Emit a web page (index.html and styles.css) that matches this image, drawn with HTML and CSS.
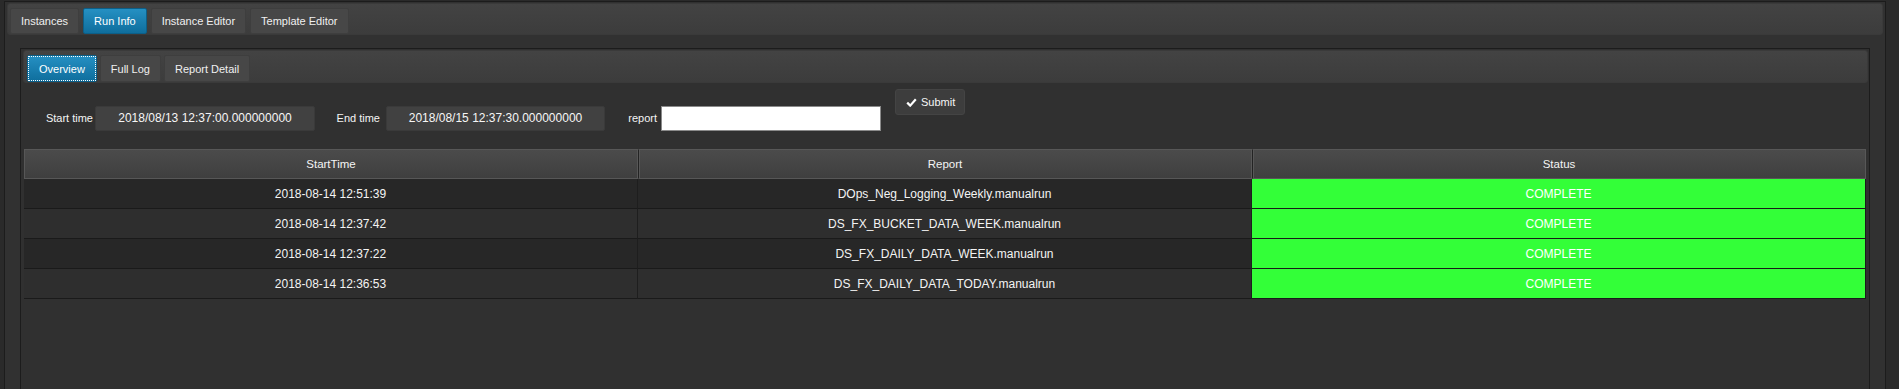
FILE: index.html
```html
<!DOCTYPE html>
<html>
<head>
<meta charset="utf-8">
<link rel="stylesheet" href="styles.css">
</head>
<body>
<div class="outer">
  <div class="tabbar outer-tabs">
    <div class="tab">Instances</div>
    <div class="tab active">Run Info</div>
    <div class="tab">Instance Editor</div>
    <div class="tab">Template Editor</div>
  </div>
  <div class="inner">
    <div class="tabbar inner-tabs">
      <div class="tab active focus"><span>Overview</span></div>
      <div class="tab">Full Log</div>
      <div class="tab">Report Detail</div>
    </div>
    <div class="form">
      <div class="lbl lbl1">Start time</div>
      <div class="field f1">2018/08/13 12:37:00.000000000</div>
      <div class="lbl lbl2">End time</div>
      <div class="field f2">2018/08/15 12:37:30.000000000</div>
      <div class="lbl lbl3">report</div>
      <div class="textbox"></div>
      <div class="btn">
        <svg class="check" width="11" height="9" viewBox="0 0 11 9"><path d="M1.2 4.6 L4.2 7.6 L9.8 1.2" fill="none" stroke="#fff" stroke-width="2.2" stroke-linejoin="miter"/></svg>
        <span>Submit</span>
      </div>
    </div>
    <table class="grid">
      <thead>
        <tr><th>StartTime</th><th>Report</th><th>Status</th></tr>
      </thead>
      <tbody>
        <tr class="odd"><td>2018-08-14 12:51:39</td><td>DOps_Neg_Logging_Weekly.manualrun</td><td class="ok">COMPLETE</td></tr>
        <tr class="even"><td>2018-08-14 12:37:42</td><td>DS_FX_BUCKET_DATA_WEEK.manualrun</td><td class="ok">COMPLETE</td></tr>
        <tr class="odd"><td>2018-08-14 12:37:22</td><td>DS_FX_DAILY_DATA_WEEK.manualrun</td><td class="ok">COMPLETE</td></tr>
        <tr class="even"><td>2018-08-14 12:36:53</td><td>DS_FX_DAILY_DATA_TODAY.manualrun</td><td class="ok">COMPLETE</td></tr>
      </tbody>
    </table>
  </div>
</div>
</body>
</html>
```

FILE: styles.css
```css
html, body {
  margin: 0;
  padding: 0;
  height: 389px;
  overflow: hidden;
}
body {
  background: #2a2a2a;
  font-family: "Liberation Sans", Arial, sans-serif;
  color: #f4f4f4;
  font-size: 11px;
}
.outer {
  margin: 1px 13px 0 4px;
  border: 1px solid #1c1c1c;
  border-bottom: none;
  background: #313131;
  padding: 1px 2px 0 2px;
  height: 386px;
}
.tabbar {
  display: flex;
  align-items: flex-start;
  gap: 4px;
  box-sizing: border-box;
  background: linear-gradient(#434343, #3c3c3c);
  border: 1px solid #3a3a3a;
  border-radius: 3px;
}
.outer-tabs {
  height: 32px;
  padding: 4px 0 0 2px;
}
.tab {
  box-sizing: border-box;
  height: 26px;
  padding: 0 10px;
  display: flex;
  align-items: center;
  background: #474747;
  border: 1px solid #3e3e3e;
  border-radius: 2px;
  color: #f0f0f0;
  white-space: nowrap;
}
.tab.active {
  background: linear-gradient(#2590c3, #0f6e9d);
  border-color: #0c5f88;
  color: #fff;
}
.inner {
  margin: 13px 13px 0 13px;
  border: 1px solid #1c1c1c;
  border-bottom: none;
  background: #303030;
  height: 339px;
  padding: 1px 1px 0 2px;
}
.inner-tabs {
  height: 33px;
  padding: 4px 0 0 3px;
  gap: 3px;
}
.inner-tabs .tab {
  height: 27px;
}
.tab.focus {
  position: relative;
  padding: 0 11px;
}
.tab.focus::after {
  content: "";
  position: absolute;
  left: 0;
  top: 0;
  right: 0;
  bottom: 0;
  border: 1px dotted #ffffff;
}
.form {
  display: flex;
  align-items: flex-start;
  margin-top: 6px;
  height: 42px;
}
.lbl {
  box-sizing: border-box;
  margin-top: 17px;
  height: 25px;
  line-height: 25px;
  text-align: right;
  color: #f4f4f4;
}
.lbl1 { width: 70px; margin-right: 2px; }
.lbl2 { width: 65px; margin-right: 6px; }
.lbl3 { width: 52px; margin-right: 4px; }
.field {
  box-sizing: border-box;
  margin-top: 17px;
  height: 25px;
  line-height: 23px;
  background: #414141;
  border: 1px solid #3a3a3a;
  border-radius: 2px;
  text-align: center;
  font-size: 12px;
  color: #f6f6f6;
}
.f1 { width: 220px; }
.f2 { width: 219px; }
.textbox {
  box-sizing: border-box;
  margin-top: 17px;
  width: 220px;
  height: 25px;
  background: #ffffff;
  border: 1px solid #8a8a8a;
}
.btn {
  box-sizing: border-box;
  margin-left: 14px;
  width: 70px;
  height: 26px;
  display: flex;
  align-items: center;
  gap: 4px;
  padding-left: 10px;
  background: #3d3d3d;
  border: 1px solid #444;
  border-radius: 3px;
  color: #f6f6f6;
}
.check { display: block; }
.grid {
  margin: 18px 2px 0 1px;
  width: 1842px;
  table-layout: fixed;
  border-collapse: separate;
  border-spacing: 0;
}
.grid th {
  box-sizing: border-box;
  height: 30px;
  padding: 0;
  font-weight: normal;
  font-size: 11.5px;
  color: #f4f4f4;
  background: linear-gradient(#4b4b4b, #3f3f3f);
  border: 1px solid #575757;
}
.grid th + th {
  border-left: 1px solid #232323;
  box-shadow: inset 1px 0 0 #575757;
}
.grid td {
  box-sizing: border-box;
  height: 30px;
  padding: 0;
  text-align: center;
  font-size: 12px;
  color: #f4f4f4;
  border-bottom: 1px solid #1a1a1a;
  border-right: 1px solid #1e1e1e;
}
.grid tr.odd td { background: #272727; }
.grid tr.even td { background: #2e2e2e; }
.grid tr td.ok {
  background: #33ff38;
  color: #ffffff;
  border-right: 1px solid #1a1a1a;
}
```
